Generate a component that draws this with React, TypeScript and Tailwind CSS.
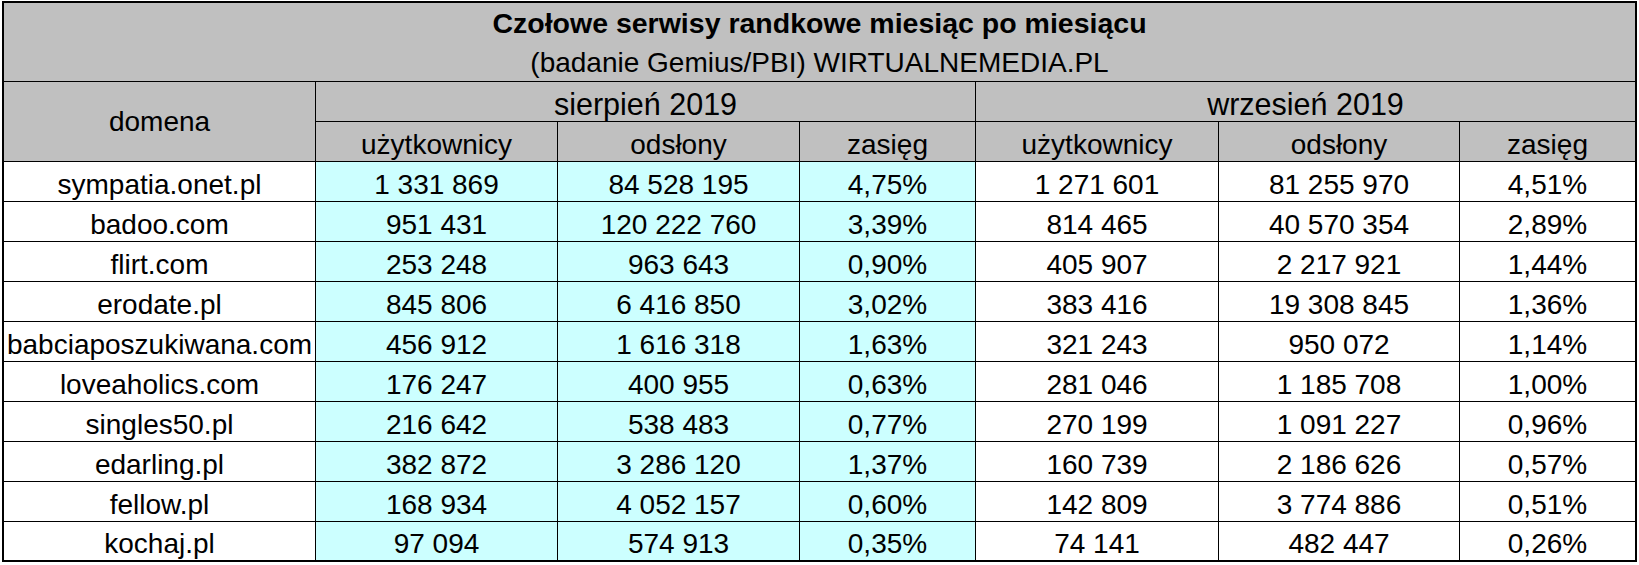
import React from "react";

const rows: [string, string, string, string, string, string, string][] = [
  ["sympatia.onet.pl", "1 331 869", "84 528 195", "4,75%", "1 271 601", "81 255 970", "4,51%"],
  ["badoo.com", "951 431", "120 222 760", "3,39%", "814 465", "40 570 354", "2,89%"],
  ["flirt.com", "253 248", "963 643", "0,90%", "405 907", "2 217 921", "1,44%"],
  ["erodate.pl", "845 806", "6 416 850", "3,02%", "383 416", "19 308 845", "1,36%"],
  ["babciaposzukiwana.com", "456 912", "1 616 318", "1,63%", "321 243", "950 072", "1,14%"],
  ["loveaholics.com", "176 247", "400 955", "0,63%", "281 046", "1 185 708", "1,00%"],
  ["singles50.pl", "216 642", "538 483", "0,77%", "270 199", "1 091 227", "0,96%"],
  ["edarling.pl", "382 872", "3 286 120", "1,37%", "160 739", "2 186 626", "0,57%"],
  ["fellow.pl", "168 934", "4 052 157", "0,60%", "142 809", "3 774 886", "0,51%"],
  ["kochaj.pl", "97 094", "574 913", "0,35%", "74 141", "482 447", "0,26%"],
];

const sub = ["użytkownicy", "odsłony", "zasięg"];

export default function App() {
  return (
    <div className="bg-white w-[1639px] h-[565px] pl-[2px] pt-[1px] font-['Liberation_Sans',Arial,sans-serif] text-black text-[28px]">
      <div className="grid w-fit border-2 border-black bg-black gap-px grid-cols-[311px_241px_241px_175px_242px_240px_175px] grid-rows-[78px_39px_39px_repeat(9,39px)_38px]">
        <div className="col-span-7 bg-[#c0c0c0] flex flex-col items-center justify-center leading-[40px] pt-[2px]">
          <div className="font-bold text-[28.5px]">Czołowe serwisy randkowe miesiąc po miesiącu</div>
          <div>(badanie Gemius/PBI) WIRTUALNEMEDIA.PL</div>
        </div>
        <div className="row-span-2 bg-[#c0c0c0] flex items-center justify-center leading-[32px]">
          domena
        </div>
        <div className="col-span-3 bg-[#c0c0c0] flex items-end justify-center leading-[34px] text-[30.5px]">
          sierpień 2019
        </div>
        <div className="col-span-3 bg-[#c0c0c0] flex items-end justify-center leading-[34px] text-[30.5px]">
          wrzesień 2019
        </div>
        {[...sub, ...sub].map((s, i) => (
          <div key={i} className="bg-[#c0c0c0] flex items-end justify-center leading-[32px]">
            {s}
          </div>
        ))}
        {rows.map((r, ri) =>
          r.map((c, ci) => (
            <div
              key={`${ri}-${ci}`}
              className={`flex items-end justify-center leading-[32px] whitespace-nowrap ${
                ci >= 1 && ci <= 3 ? "bg-[#ccffff]" : "bg-white"
              }`}
            >
              {c}
            </div>
          ))
        )}
      </div>
    </div>
  );
}
